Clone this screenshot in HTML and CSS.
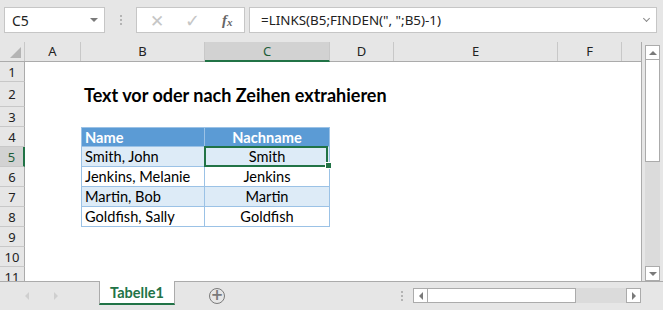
FILE: index.html
```html
<!DOCTYPE html>
<html lang="de">
<head>
    <meta charset="UTF-8">
    <meta name="viewport" content="width=device-width, initial-scale=1.0">
    <title>Tabelle1</title>
    <link rel="stylesheet" href="styles.css">
</head>
<body>
    <div class="excel">
        <div class="formula-bar">
            <div class="name-box">C5<span class="caret"></span></div>
            <div class="grip"><i></i><i></i><i></i></div>
            <div class="fx-buttons">
                <span class="btn-cancel">&#x2715;</span>
                <span class="btn-enter">&#x2713;</span>
                <span class="btn-fx">f<sub>x</sub></span>
            </div>
            <div class="formula">=LINKS(B5;FINDEN(", ";B5)-1)<span class="chevron"></span></div>
        </div>

        <div class="workspace">
            <div class="sheet">
                <div class="row col-heads">
                    <div class="corner"><span class="corner-mark"></span></div>
                    <div class="ch">A</div>
                    <div class="ch">B</div>
                    <div class="ch active">C</div>
                    <div class="ch">D</div>
                    <div class="ch">E</div>
                    <div class="ch">F</div>
                    <div class="ch last"></div>
                </div>
                <div class="row"><div class="rh">1</div></div>
                <div class="row tall">
                    <div class="rh">2</div>
                    <div class="cell-a"></div>
                    <div class="title">Text vor oder nach Zeihen extrahieren</div>
                </div>
                <div class="row"><div class="rh">3</div></div>
                <div class="row">
                    <div class="rh">4</div>
                    <div class="cell-a"></div>
                    <div class="tc head first">Name</div>
                    <div class="tc head center">Nachname</div>
                </div>
                <div class="row">
                    <div class="rh active">5</div>
                    <div class="cell-a"></div>
                    <div class="tc band first">Smith, John</div>
                    <div class="tc band center selected">Smith</div>
                </div>
                <div class="row">
                    <div class="rh">6</div>
                    <div class="cell-a"></div>
                    <div class="tc first">Jenkins, Melanie</div>
                    <div class="tc center">Jenkins</div>
                </div>
                <div class="row">
                    <div class="rh">7</div>
                    <div class="cell-a"></div>
                    <div class="tc band first">Martin, Bob</div>
                    <div class="tc band center">Martin</div>
                </div>
                <div class="row">
                    <div class="rh">8</div>
                    <div class="cell-a"></div>
                    <div class="tc first">Goldfish, Sally</div>
                    <div class="tc center">Goldfish</div>
                </div>
                <div class="row"><div class="rh">9</div></div>
                <div class="row"><div class="rh">10</div></div>
                <div class="row"><div class="rh">11</div></div>
            </div>

            <div class="vscroll">
                <div class="sb-btn"><span class="tri-up"></span></div>
                <div class="sb-thumb"></div>
                <div class="sb-track"></div>
                <div class="sb-btn"><span class="tri-down"></span></div>
            </div>
        </div>

        <div class="tabbar">
            <div class="tab-nav">
                <span class="nav-left"></span>
                <span class="nav-right"></span>
            </div>
            <div class="tab">Tabelle1</div>
            <div class="add-sheet">+</div>
            <div class="grip h-grip"><i></i><i></i><i></i></div>
            <div class="hscroll">
                <div class="hs-btn"><span class="tri-left"></span></div>
                <div class="hs-thumb"></div>
                <div class="hs-track"></div>
                <div class="hs-btn"><span class="tri-right"></span></div>
            </div>
        </div>
    </div>
</body>
</html>
```

FILE: styles.css
```css
body {
    margin: 0;
    padding: 0;
    font-family: "Noto Sans", sans-serif;
}
.excel {
    width: 663px;
    height: 310px;
    background: #e6e6e6;
    display: flex;
    flex-direction: column;
    overflow: hidden;
}

/* formula bar */
.formula-bar {
    height: 42px;
    display: flex;
    align-items: flex-start;
    padding: 7px 0 0 4px;
    box-sizing: border-box;
}
.name-box,
.fx-buttons,
.formula {
    height: 26px;
    box-sizing: border-box;
    background: #fff;
    border: 1px solid #c6c6c6;
    display: flex;
    align-items: center;
}
.name-box {
    width: 101px;
    padding-left: 7px;
    font-size: 14px;
    color: #222;
    position: relative;
}
.caret {
    position: absolute;
    right: 6px;
    top: 10px;
    border-left: 4px solid transparent;
    border-right: 4px solid transparent;
    border-top: 4px solid #7a7a7a;
}
.grip {
    width: 31px;
    height: 26px;
    display: flex;
    flex-direction: column;
    align-items: center;
    justify-content: center;
    gap: 2px;
}
.grip i {
    width: 2px;
    height: 2px;
    background: #b4b4b4;
}
.fx-buttons {
    width: 109px;
    padding: 0 0 0 13px;
    font-size: 17px;
}
.btn-cancel {
    color: #c6c6c6;
    width: 35px;
}
.btn-enter {
    color: #c6c6c6;
    width: 37px;
    font-size: 18px;
}
.btn-fx {
    font-family: "Liberation Serif", serif;
    font-style: italic;
    font-weight: bold;
    color: #666;
    font-size: 15px;
}
.btn-fx sub {
    font-size: 11px;
    vertical-align: -1px;
}
.formula {
    width: 408px;
    margin-left: 4px;
    padding-left: 11px;
    font-size: 13.4px;
    color: #222;
    position: relative;
}
.chevron {
    position: absolute;
    right: 7px;
    top: 8px;
    width: 4px;
    height: 4px;
    border-right: 1.5px solid #8a8a8a;
    border-bottom: 1.5px solid #8a8a8a;
    transform: rotate(45deg);
}

/* sheet grid */
.workspace {
    height: 239px;
    display: flex;
}
.sheet {
    width: 642px;
    background: #fff;
    border-right: 1px solid #ababab;
    box-sizing: border-box;
    overflow: hidden;
}
.row {
    display: grid;
    grid-template-columns: 25px 56px 124px 125px 64px 164px 64px 20px;
    height: 20px;
    font-family: "Lato", sans-serif;
    font-size: 14.6px;
    color: #000;
}
.row.tall {
    height: 25px;
}
.col-heads {
    background: #e6e6e6;
    border-bottom: 1px solid #ababab;
    box-sizing: border-box;
    font-family: "Noto Sans", sans-serif;
    font-size: 13px;
    color: #222;
}
.corner {
    border-right: 1px solid #c8c8c8;
    position: relative;
}
.corner-mark {
    position: absolute;
    right: 3px;
    bottom: 3px;
    border-left: 11px solid transparent;
    border-bottom: 11px solid #b4b4b4;
}
.ch {
    border-right: 1px solid #c8c8c8;
    display: flex;
    align-items: center;
    justify-content: center;
    line-height: 1;
}
.ch.active {
    background: #d2d2d2;
    border-bottom: 2px solid #217346;
    color: #1e5e3a;
    margin-bottom: -1px;
}
.ch.last {
    border-right: none;
}
.rh {
    background: #e6e6e6;
    border-right: 1px solid #ababab;
    border-bottom: 1px solid #c8c8c8;
    display: flex;
    align-items: center;
    justify-content: center;
    font-family: "Noto Sans", sans-serif;
    font-size: 13px;
    color: #222;
}
.rh.active {
    background: #d2d2d2;
    border-right: 2px solid #217346;
    color: #1e5e3a;
}
.title {
    grid-column: 3 / span 4;
    font-weight: bold;
    font-size: 18px;
    padding-left: 3px;
    display: flex;
    align-items: center;
    white-space: nowrap;
}

/* table */
.tc {
    border-right: 1px solid #9bc2e6;
    border-bottom: 1px solid #9bc2e6;
    padding: 0 3px;
    display: flex;
    align-items: center;
    white-space: nowrap;
    box-sizing: border-box;
}
.tc.first {
    border-left: 1px solid #9bc2e6;
}
.tc.center {
    justify-content: center;
}
.tc.head {
    background: #5b9bd5;
    color: #fff;
    font-weight: bold;
    border-top: 1px solid #9bc2e6;
}
.tc.band {
    background: #ddebf7;
}
.tc.selected {
    position: relative;
}
.tc.selected::before {
    content: "";
    position: absolute;
    left: -1px;
    top: -1px;
    right: 1px;
    bottom: -1px;
    border: 2px solid #217346;
}
.tc.selected::after {
    content: "";
    position: absolute;
    right: -3px;
    bottom: -3px;
    width: 5px;
    height: 5px;
    background: #217346;
    border: 1px solid #fff;
}

/* vertical scrollbar */
.vscroll {
    width: 15px;
    margin: 3px 0 0 3px;
    display: flex;
    flex-direction: column;
}
.sb-btn {
    height: 15px;
    background: #fff;
    border: 1px solid #ababab;
    box-sizing: border-box;
    display: flex;
    align-items: center;
    justify-content: center;
}
.sb-thumb {
    height: 102px;
    background: #fff;
    border: 1px solid #ababab;
    border-top: none;
    box-sizing: border-box;
}
.sb-track {
    flex: 1;
    background: #dbdbdb;
}
.tri-up,
.tri-down {
    border-left: 4px solid transparent;
    border-right: 4px solid transparent;
}
.tri-up {
    border-bottom: 4px solid #7a7a7a;
}
.tri-down {
    border-top: 4px solid #7a7a7a;
}

/* sheet tabs */
.tabbar {
    height: 29px;
    border-top: 1px solid #ababab;
    box-sizing: border-box;
    display: flex;
    align-items: flex-start;
}
.tab-nav {
    width: 99px;
    height: 28px;
    display: flex;
    align-items: center;
    padding-left: 25px;
    gap: 25px;
    box-sizing: border-box;
}
.nav-left {
    border-top: 4px solid transparent;
    border-bottom: 4px solid transparent;
    border-right: 4px solid #cfcfcf;
}
.nav-right {
    border-top: 4px solid transparent;
    border-bottom: 4px solid transparent;
    border-left: 4px solid #cfcfcf;
}
.tab {
    width: 76px;
    height: 24px;
    margin-top: -1px;
    background: #fff;
    border-left: 1px solid #ababab;
    border-right: 1px solid #ababab;
    border-bottom: 2px solid #217346;
    box-sizing: border-box;
    display: flex;
    align-items: center;
    justify-content: center;
    font-family: "Lato", sans-serif;
    font-weight: bold;
    font-size: 14.5px;
    color: #217346;
}
.add-sheet {
    width: 14px;
    height: 14px;
    margin: 6px 0 0 34px;
    border: 1.5px solid #7a7a7a;
    border-radius: 50%;
    color: #7a7a7a;
    font-size: 15px;
    font-weight: bold;
    line-height: 13px;
    text-align: center;
    font-family: "DejaVu Sans", sans-serif;
}
.h-grip {
    margin-left: 172px;
    width: 10px;
    height: 28px;
}
.hscroll {
    width: 228px;
    height: 15px;
    margin: 6px 0 0 6px;
    display: flex;
}
.hs-btn {
    width: 15px;
    background: #fff;
    border: 1px solid #ababab;
    box-sizing: border-box;
    display: flex;
    align-items: center;
    justify-content: center;
}
.hs-thumb {
    width: 148px;
    background: #fff;
    border: 1px solid #ababab;
    border-left: none;
    box-sizing: border-box;
}
.hs-track {
    flex: 1;
    background: #dbdbdb;
}
.tri-left {
    border-top: 4px solid transparent;
    border-bottom: 4px solid transparent;
    border-right: 4px solid #7a7a7a;
}
.tri-right {
    border-top: 4px solid transparent;
    border-bottom: 4px solid transparent;
    border-left: 4px solid #7a7a7a;
}
```
